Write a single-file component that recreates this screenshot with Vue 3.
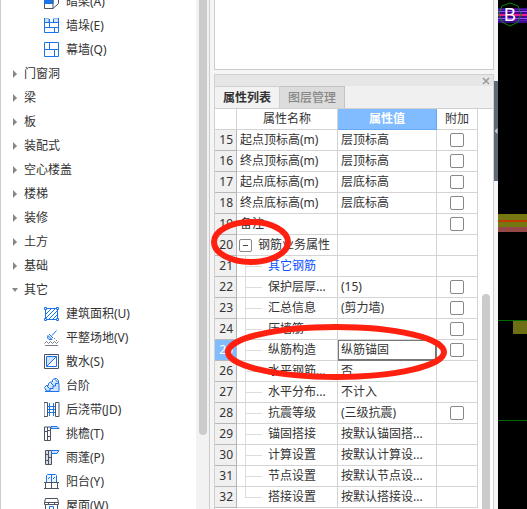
<script setup>
import { ref, computed } from 'vue'

const BLUE = '#1a73e8'
const DARK = '#4a5264'
const PALE = '#cfe2fa'

const icons = {
  beam: [
    { d: 'M.5 5.5L5 2h9.500V9.500L9 14.500H.5z', s: DARK },
    { d: 'M.5 5.500L5 1.500h9.500L9 6v3.500H.5z', s: BLUE, f: BLUE },
    { d: 'M9 6v8.500', s: DARK },
  ],
  pier: [
    { d: 'M.5.5h4v4h-4zM9.500.5h5v4h-5z', s: '#8db9ef', f: PALE },
    { d: 'M.5 0v14.500h14V0M.5 4.500h14M.5 9.500h14M5.500 1v8.500M9.500 1v3.500M10.500 9.500v5', s: BLUE },
  ],
  curtain: [{ d: 'M.5.5h14v14H.5zM.5 7.500h14M5.500.5v7M10.500 7.500v7', s: BLUE }],
  area: [
    { d: 'M1.500 2.500h12v11h-12z', s: BLUE },
    { d: 'M2 8l5-5M2 12l9-9M5 13l8-8M9 13l4-4', s: BLUE },
    { d: 'M.5 1.500h2v2h-2zM12.500 1.500h2v2h-2zM.5 12.500h2v2h-2zM12.500 12.500h2v2h-2z', s: BLUE, f: '#fff' },
  ],
  level: [
    { d: 'M12.500.5L8 5.500M5 4l4 4M4 5.500l4 4H5L3.500 8z', s: BLUE, f: PALE },
    { d: 'M.5 13.500l2-2 2 2 2-2 2 2 2-2 2 2 2-2M1 15.500h13M10 8.500h1M12 10.500h1', s: '#7a8090' },
  ],
  apron: [
    { d: 'M.5.5h14v14H.5z', s: DARK },
    { d: 'M2.500 12.500v-10h10z', f: PALE },
    { d: 'M2.500 2.500h10v10h-10zM2.500 12.500l10-10', s: BLUE },
  ],
  steps: [
    { d: 'M1 14V10l3-1 3-3 3-2 4-2 1 3v9z', f: PALE },
    { d: 'M.5 9.500l2-2h2v-2l2-1.500h2V2l2-1.500h2l2 2v3h-3v2.500H9v2.500H6v2.500H2.500zM2.500 7.500l3 3M6.500 4.500l3 3M10.500 1l3 3M1 13.500h14v-8', s: BLUE },
  ],
  strip: [
    { d: 'M0 .5h3.500v14H0zM11.500.5H15v14h-3.500z', s: DARK },
    { d: 'M5.500 1v13M9.500 1v13M4 4.500h7M4 7.500h7M4 10.500h7', s: BLUE },
  ],
  eaves: [
    { d: 'M.5 1v13.500h6V1zM3.500 1v13.500M.5 5.500h3M3.500 4.500h3M3.500 10.500h3', s: DARK },
    { d: 'M7 .5h6l2 2H7z', s: BLUE, f: PALE },
  ],
  canopy: [
    { d: 'M1.500.5h6v14h-6z', s: DARK, f: '#d9dbe0' },
    { d: 'M4.500 1v13M1.500 4.500h3M4.500 7.500h3M1.500 10.500h3', s: DARK },
    { d: 'M7.500.5h7.500L13 3.500H7.500z', s: BLUE, f: PALE },
  ],
  balcony: [
    { d: 'M2.500 8V1.500l1-1h8l1 1V8M7.500.5V8M4 5l2-2M9 5l2-2', s: BLUE, f: '#eaf3ff' },
    { d: 'M0 8.500h15M1.500 8.500v5.500M7.500 8.500v5.500M13.500 8.500v5.500M0 14.500h15', s: DARK },
  ],
  roof: [
    { d: 'M1.500.5h12l1 4v2H.5v-2zM.5 4.500h14M1.500 6.500v8M13.500 6.500v8M1 14.500h13M4.500 4.500v2M10.500 4.500v2', s: DARK },
    { d: 'M5.500 14V8.500h4V14', s: BLUE },
  ],
}

const tree = ref([
  { label: '暗梁(A)', icon: 'beam' },
  { label: '墙垛(E)', icon: 'pier' },
  { label: '幕墙(Q)', icon: 'curtain' },
  { label: '门窗洞' },
  { label: '梁' },
  { label: '板' },
  { label: '装配式' },
  { label: '空心楼盖' },
  { label: '楼梯' },
  { label: '装修' },
  { label: '土方' },
  { label: '基础' },
  { label: '其它', open: true },
  { label: '建筑面积(U)', icon: 'area' },
  { label: '平整场地(V)', icon: 'level' },
  { label: '散水(S)', icon: 'apron' },
  { label: '台阶', icon: 'steps' },
  { label: '后浇带(JD)', icon: 'strip' },
  { label: '挑檐(T)', icon: 'eaves' },
  { label: '雨蓬(P)', icon: 'canopy' },
  { label: '阳台(Y)', icon: 'balcony' },
  { label: '屋面(W)', icon: 'roof' },
])

const rows = ref([
  { no: 15, name: '起点顶标高(m)', value: '层顶标高', check: true },
  { no: 16, name: '终点顶标高(m)', value: '层顶标高', check: true },
  { no: 17, name: '起点底标高(m)', value: '层底标高', check: true },
  { no: 18, name: '终点底标高(m)', value: '层底标高', check: true },
  { no: 19, name: '备注', value: '', check: true },
  { no: 20, name: '钢筋业务属性', value: '', group: true },
  { no: 21, name: '其它钢筋', value: '', child: true, link: true },
  { no: 22, name: '保护层厚...', value: '(15)', child: true, check: true },
  { no: 23, name: '汇总信息', value: '(剪力墙)', child: true, check: true },
  { no: 24, name: '压墙筋', value: '', child: true, check: true },
  { no: 25, name: '纵筋构造', value: '纵筋锚固', child: true, check: true },
  { no: 26, name: '水平钢筋...', value: '否', child: true },
  { no: 27, name: '水平分布...', value: '不计入', child: true },
  { no: 28, name: '抗震等级', value: '(三级抗震)', child: true, check: true },
  { no: 29, name: '锚固搭接', value: '按默认锚固搭...', child: true },
  { no: 30, name: '计算设置', value: '按默认计算设...', child: true },
  { no: 31, name: '节点设置', value: '按默认节点设...', child: true },
  { no: 32, name: '搭接设置', value: '按默认搭接设...', child: true, last: true },
])

const selected = ref(25)
const expanded = ref(true)
const tab = ref('属性列表')
const visibleRows = computed(() => rows.value.filter((r) => expanded.value || !r.child))
</script>

<template>
  <div class="app">
    <nav class="sidebar">
      <ul class="tree">
        <li v-for="item in tree" :key="item.label">
          <button type="button" :class="item.icon ? 'leaf' : 'branch'">
            <svg v-if="item.icon" class="icon" viewBox="0 0 16 16">
              <path
                v-for="(p, i) in icons[item.icon]"
                :key="i"
                :d="p.d"
                :stroke="p.s || 'none'"
                :fill="p.f || 'none'"
              />
            </svg>
            <span v-else class="arrow" :class="{ open: item.open }"></span>
            <span>{{ item.label }}</span>
          </button>
        </li>
      </ul>
      <div class="tree-scroll"><div class="tree-thumb"></div></div>
    </nav>

    <main class="middle">
      <div class="list-box"></div>
      <section class="panel">
        <div class="titlebar">
          <button type="button" class="close" aria-label="关闭">
            <svg viewBox="0 0 8 8"><path d="M1 1l6 6M7 1L1 7" /></svg>
          </button>
        </div>
        <div class="tabs">
          <button
            v-for="t in ['属性列表', '图层管理']"
            :key="t"
            type="button"
            :class="{ active: tab === t }"
            @click="tab = t"
          >{{ t }}</button>
        </div>
        <div class="grid">
          <table>
            <colgroup>
              <col class="c-no" />
              <col class="c-name" />
              <col />
              <col class="c-add" />
            </colgroup>
            <thead>
              <tr>
                <th></th>
                <th>属性名称</th>
                <th class="current">属性值</th>
                <th>附加</th>
              </tr>
            </thead>
            <tbody>
              <tr v-for="row in visibleRows" :key="row.no" :class="{ selected: row.no === selected }" @click="selected = row.no">
                <td class="no">{{ row.no }}</td>
                <td class="name">
                  <div class="name-cell" :class="{ child: row.child, last: row.last, group: row.group }">
                    <button v-if="row.group" type="button" class="toggle" aria-label="展开" @click.stop="expanded = !expanded"></button>
                    <span :id="`name-${row.no}`" :class="{ link: row.link }">{{ row.name }}</span>
                  </div>
                </td>
                <td class="value">{{ row.value }}</td>
                <td class="add">
                  <input v-if="row.check" type="checkbox" :aria-labelledby="`name-${row.no}`" />
                </td>
              </tr>
            </tbody>
          </table>
          <div class="grid-scroll"><div class="grid-thumb"></div></div>
        </div>
      </section>
      <svg class="marks" width="250" height="180">
        <ellipse cx="47" cy="33" rx="37" ry="20" />
        <ellipse cx="132" cy="143" rx="108" ry="25" />
      </svg>
    </main>

    <div class="splitter">
      <button type="button" class="handle" aria-label="折叠"></button>
    </div>

    <aside class="canvas">
      <svg width="100%" height="509">
        <rect y="8" width="100%" height="15" fill="#3b0a8c" />
        <path d="M0 9.500h400M0 20.500h400" stroke="#5a18b8" />
        <path d="M0 11.500h400M0 18.500h400" stroke="#a04cff" />
        <path d="M0 15h400" stroke="#e8208c" stroke-width="2" />
        <path d="M12 3l8 3 3 8-3 8-8 4-8-4-3-8 3-8z" fill="none" stroke="#0a8a0a" />
        <text x="6" y="21">B</text>
        <rect y="214" width="100%" height="13" fill="#777711" />
        <rect y="220" width="100%" height="2" fill="#c03a08" />
        <rect y="227" width="100%" height="5" fill="#964848" />
        <path d="M0 320.500h400M0 420.500h400" stroke="#006a00" />
        <rect x="15" y="321" width="100%" height="13" fill="#6e6e14" />
      </svg>
    </aside>
  </div>
</template>

<style>
body {
  background: #f5f5f5;
}
</style>

<style scoped>
.app {
  display: flex;
  height: 100vh;
  overflow: hidden;
  font-family: "Noto Sans", "Noto Sans CJK SC", sans-serif;
  font-size: 12px;
  color: #333;
}
button {
  margin: 0;
  padding: 0;
  border: 0;
  background: none;
  color: inherit;
  font: inherit;
}
.sidebar {
  box-sizing: border-box;
  flex: 0 0 210px;
  display: flex;
  overflow: hidden;
  border-left: 1px solid #ccc;
  border-right: 1px solid #ccc;
  background: #fff;
}
.tree {
  flex: 1;
  margin: -10px 0 0;
  padding: 0;
  list-style: none;
}
.tree button {
  display: flex;
  align-items: center;
  width: 100%;
  height: 24px;
  line-height: 24px;
  white-space: nowrap;
}
.branch {
  gap: 6px;
  padding-left: 11px;
}
.leaf {
  gap: 6px;
  padding-left: 43px;
}
.icon {
  width: 16px;
  height: 16px;
}
.arrow {
  width: 6px;
  height: 8px;
  background: #888;
  clip-path: polygon(17% 0, 84% 50%, 17% 100%);
}
.arrow.open {
  clip-path: polygon(0 25%, 100% 25%, 50% 75%);
}
.tree-scroll {
  flex: 0 0 13px;
  background: #f2f2f2;
}
.tree-thumb {
  width: 8px;
  height: 435px;
  margin-left: 3px;
  border-radius: 0 0 4px 4px;
  background: #cbcbcb;
}
.middle {
  position: relative;
  flex: 1;
  min-width: 0;
  display: flex;
  flex-direction: column;
  gap: 4px;
  margin-left: 4px;
}
.list-box {
  box-sizing: border-box;
  flex: 0 0 70px;
  border: 1px solid #ccc;
  border-top: 0;
  background: #fff;
}
.panel {
  flex: 1;
  min-height: 0;
  display: flex;
  flex-direction: column;
  border: 1px solid #d0d0d0;
  border-bottom: 0;
  background: #f0f0f0;
}
.titlebar {
  flex: 0 0 11px;
  display: flex;
  align-items: center;
  justify-content: flex-end;
  padding-right: 3px;
  background: #e6e6e6;
}
.close,
.close svg {
  display: block;
  width: 8px;
  height: 8px;
}
.close path {
  stroke: #999;
  stroke-width: 1.5;
}
.tabs {
  flex: 0 0 22px;
  display: flex;
  border-bottom: 1px solid #d0d0d0;
}
.tabs button {
  box-sizing: border-box;
  width: 65px;
  border: 1px solid #c4c4c4;
  border-left: 0;
  border-bottom: 0;
  background: #dcdcdc;
  color: #888;
  font-weight: 500;
  line-height: 21px;
}
.tabs .active {
  border-color: #d0d0d0;
  background: #f2f2f2;
  color: #333;
  font-weight: 600;
}
.grid {
  flex: 1;
  min-height: 0;
  display: flex;
  align-items: stretch;
  overflow: hidden;
  background: #fff;
}
table {
  flex: 1;
  align-self: flex-start;
  width: 100%;
  min-width: 0;
  table-layout: fixed;
  border-collapse: separate;
  border-spacing: 0;
}
.c-no {
  width: 22px;
}
.c-name {
  width: 101px;
}
.c-add {
  width: 41px;
}
th,
td {
  box-sizing: border-box;
  height: 21px;
  padding: 0;
  border-right: 1px solid #d4d4d4;
  border-bottom: 1px solid #d4d4d4;
  font-weight: 400;
  line-height: 20px;
  white-space: nowrap;
  overflow: hidden;
}
.current {
  border-color: #68a8f0;
  background: #80bcff;
  color: #fff;
  font-weight: 600;
}
.no {
  padding-right: 3px;
  border-right-color: #b4b4b4;
  border-bottom-color: #b8b8b8;
  background: #f0f0f0;
  text-align: right;
}
.name-cell {
  position: relative;
  display: flex;
  align-items: center;
  height: 20px;
  padding-left: 3px;
}
.child {
  padding-left: 31px;
}
.group {
  gap: 6px;
  padding-left: 2px;
}
.child::before {
  content: "";
  position: absolute;
  left: 8px;
  top: 0;
  width: 1px;
  height: 20px;
  background: #dcdcdc;
}
.last::before {
  height: 10px;
}
.child::after {
  content: "";
  position: absolute;
  left: 8px;
  top: 10px;
  width: 17px;
  height: 1px;
  background: #dcdcdc;
}
.toggle {
  box-sizing: border-box;
  display: flex;
  align-items: center;
  justify-content: center;
  width: 13px;
  height: 13px;
  border: 1px solid #888;
  border-radius: 2px;
  background: #fff;
}
.toggle::before {
  content: "";
  width: 5px;
  height: 1px;
  background: #444;
}
.link {
  color: #0a50ff;
}
.value {
  padding-left: 3px;
}
.selected .no {
  background: #80bcff;
  color: #fff;
}
.selected .value {
  box-shadow: inset 0 0 0 1px #777;
  border-color: #777;
}
.add {
  text-align: center;
}
.add input {
  appearance: none;
  box-sizing: border-box;
  display: block;
  width: 14px;
  height: 14px;
  margin: 0 auto;
  border: 1px solid #888;
  border-radius: 2px;
  background: #fff;
}
.add input:checked {
  background: #80bcff;
}
.grid-scroll {
  flex: 0 0 15px;
}
.grid-thumb {
  width: 8px;
  height: 100%;
  margin: 185px 0 0 4px;
  border-radius: 4px 4px 0 0;
  background: #cbcbcb;
}
.marks {
  position: absolute;
  left: -10px;
  top: 209px;
  pointer-events: none;
}
.marks ellipse {
  fill: none;
  stroke: #ff2010;
  stroke-width: 6;
}
.splitter {
  flex: 0 0 4px;
  padding-top: 81px;
}
.handle {
  display: flex;
  align-items: center;
  justify-content: center;
  width: 4px;
  height: 100px;
  background: #606a76;
}
.handle::before {
  content: "";
  width: 3px;
  height: 6px;
  background: #c8ccd0;
  clip-path: polygon(100% 0, 0 50%, 100% 100%);
}
.canvas {
  flex: 0 0 29px;
  overflow: hidden;
  background: #000;
}
.canvas svg {
  display: block;
}
.canvas text {
  fill: #fff;
  font-family: "Liberation Sans", sans-serif;
  font-size: 18px;
}
</style>
